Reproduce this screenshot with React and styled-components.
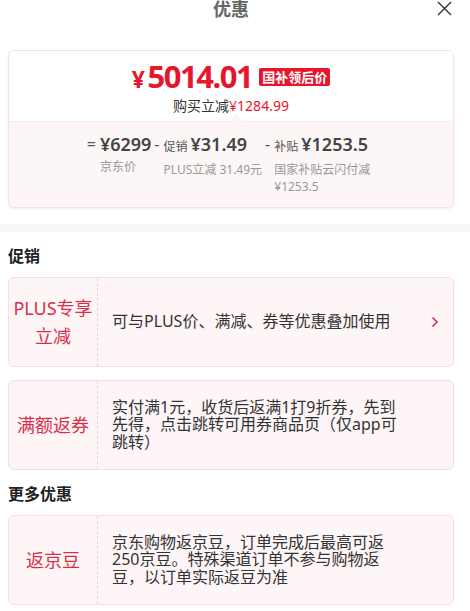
import React from 'react';
import styled, { createGlobalStyle } from 'styled-components';

const GlobalStyle = createGlobalStyle`
  body {
    margin: 0;
    background: #fff;
    font-family: "Noto Sans", "Noto Sans CJK SC", sans-serif;
    color: #333;
  }
`;

const breakdown = [
  { op: '=', tag: '', amount: '¥6299', note: '京东价' },
  { op: '-', tag: '促销', amount: '¥31.49', note: 'PLUS立减 31.49元' },
  { op: '-', tag: '补贴', amount: '¥1253.5', note: '国家补贴云闪付减¥1253.5' },
];

const promos = [
  { label: ['PLUS专享', '立减'], text: '可与PLUS价、满减、券等优惠叠加使用', arrow: true },
  { label: ['满额返券'], text: '实付满1元，收货后返满1打9折券，先到先得，点击跳转可用券商品页（仅app可跳转）' },
];

const more = [
  { label: ['返京豆'], text: '京东购物返京豆，订单完成后最高可返250京豆。特殊渠道订单不参与购物返豆，以订单实际返豆为准' },
];

function PromoCard({ item }) {
  return (
    <Card>
      <CardLabel>
        {item.label.map((l) => (
          <div key={l}>{l}</div>
        ))}
      </CardLabel>
      <CardBody>
        <CardText>{item.text}</CardText>
        <Chevron $show={item.arrow} width="8" height="12" viewBox="0 0 8 12">
          <polyline points="1.5,1.5 6,6 1.5,10.5" fill="none" stroke="#d7304a" strokeWidth="1.6" />
        </Chevron>
      </CardBody>
    </Card>
  );
}

export default function App() {
  return (
    <>
      <GlobalStyle />
      <Page>
        <Header>
          <Title>优惠</Title>
          <Close width="15" height="15" viewBox="0 0 15 15">
            <path d="M1 1 L14 14 M14 1 L1 14" stroke="#333" strokeWidth="1.4" fill="none" />
          </Close>
        </Header>

        <PriceCard>
          <PriceTop>
            <PriceRow>
              <BigPrice>
                <Yen>¥</Yen>5014.01
              </BigPrice>
              <Badge>国补领后价</Badge>
            </PriceRow>
            <SubLine>
              购买立减<Red>¥1284.99</Red>
            </SubLine>
          </PriceTop>
          <PriceBottom>
            {breakdown.map((b) => (
              <Column key={b.amount}>
                <Op>{b.op}</Op>
                <Amount>
                  {b.tag && <Tag>{b.tag}</Tag>}
                  {b.amount}
                </Amount>
                <Note>{b.note}</Note>
              </Column>
            ))}
          </PriceBottom>
        </PriceCard>

        <Band />

        <SectionTitle>促销</SectionTitle>
        <CardList>
          {promos.map((p) => (
            <PromoCard key={p.text} item={p} />
          ))}
        </CardList>

        <SectionTitle>更多优惠</SectionTitle>
        <CardList>
          {more.map((p) => (
            <PromoCard key={p.text} item={p} />
          ))}
        </CardList>
      </Page>
    </>
  );
}

const Page = styled.div`
  width: 446px;
  margin-left: 8px;
`;

const Header = styled.div`
  position: relative;
  height: 16px;
  display: flex;
  justify-content: center;
  align-items: center;
`;

const Title = styled.div`
  font-size: 18px;
  font-weight: 700;
  color: #666;
  line-height: 16px;
  padding-top: 1px;
`;

const Close = styled.svg`
  position: absolute;
  right: 2px;
  top: 1px;
`;

const PriceCard = styled.div`
  margin-top: 34px;
  border: 1px solid #f6e2e5;
  border-radius: 6px;
  overflow: hidden;
  box-shadow: 0 1px 2px rgba(230, 200, 205, 0.4);
`;

const PriceTop = styled.div`
  background: #fff;
  padding: 8px 0 5px;
  display: flex;
  flex-direction: column;
  align-items: center;
`;

const PriceRow = styled.div`
  display: flex;
  align-items: center;
  height: 36px;
`;

const BigPrice = styled.span`
  color: #e6162d;
  font-size: 31px;
  font-weight: 700;
  letter-spacing: -1.5px;
  line-height: 36px;
`;

const Yen = styled.span`
  font-size: 23px;
  margin-right: 4px;
`;

const Badge = styled.span`
  margin-left: 7px;
  background: #e6162d;
  color: #fff;
  font-size: 13px;
  font-weight: 700;
  line-height: 18px;
  padding: 0 3px;
  border-radius: 2px;
`;

const SubLine = styled.div`
  font-size: 14px;
  line-height: 20px;
  margin-top: 1px;
  color: #333;
`;

const Red = styled.span`
  color: #e6162d;
`;

const PriceBottom = styled.div`
  position: relative;
  background: #fcf6f7;
  border-top: 1px solid #f8ecee;
  padding: 10px 0 12px;
  display: flex;
  justify-content: center;
  gap: 3px;

  &::before {
    content: '';
    position: absolute;
    left: 223px;
    top: -5px;
    width: 8px;
    height: 8px;
    background: #fcf6f7;
    border-left: 1px solid #f8ecee;
    border-top: 1px solid #f8ecee;
    transform: rotate(45deg);
  }
`;

const Column = styled.div`
  display: grid;
  grid-template-columns: auto auto;
  column-gap: 4px;
  align-content: start;
`;

const Op = styled.span`
  font-size: 16px;
  line-height: 24px;
  color: #555;
`;

const Amount = styled.span`
  font-size: 18px;
  font-weight: 600;
  line-height: 24px;
  color: #444;
  white-space: nowrap;
`;

const Tag = styled.span`
  font-size: 12px;
  font-weight: 400;
  margin-right: 3px;
  color: #555;
`;

const Note = styled.div`
  grid-column: 2;
  max-width: 101px;
  margin-top: 2px;
  font-size: 12px;
  line-height: 17px;
  color: #999;
`;

const Band = styled.div`
  height: 8px;
  margin: 16px -16px 0 -8px;
  background: #f5f7fa;
`;

const SectionTitle = styled.div`
  font-size: 16px;
  font-weight: 700;
  color: #222;
  line-height: 22px;
  margin: 13px 0 10px;
`;

const CardList = styled.div`
  display: flex;
  flex-direction: column;
  gap: 13px;
`;

const Card = styled.div`
  display: flex;
  width: 446px;
  min-height: 90px;
  box-sizing: border-box;
  overflow: hidden;
  background: #fef5f6;
  border: 1px solid #f5dde2;
  border-radius: 6px;
`;

const CardLabel = styled.div`
  width: 88px;
  flex-shrink: 0;
  border-right: 1px dashed #efd0d6;
  display: flex;
  flex-direction: column;
  justify-content: center;
  align-items: center;
  font-size: 18px;
  line-height: 28px;
  color: #d7304a;
  text-align: center;
`;

const CardBody = styled.div`
  flex: 1;
  min-width: 0;
  display: flex;
  align-items: center;
  padding: 0 14px;
`;

const CardText = styled.div`
  flex: 1;
  min-width: 0;
  font-size: 16px;
  line-height: 17.5px;
  color: #333;
`;

const Chevron = styled.svg`
  flex-shrink: 0;
  margin-left: 34px;
  visibility: ${(p) => (p.$show ? 'visible' : 'hidden')};
`;
